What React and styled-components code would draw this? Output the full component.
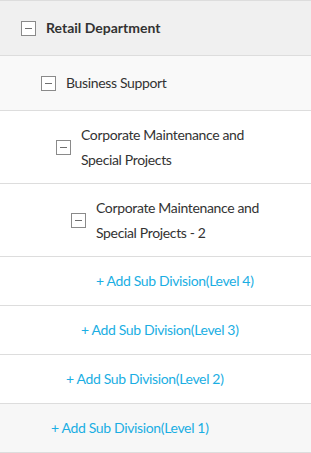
import React from "react";
import styled, { createGlobalStyle } from "styled-components";

const GlobalStyle = createGlobalStyle`
  html, body {
    margin: 0;
    padding: 0;
    background: #ffffff;
  }
  body {
    font-family: Lato, "Open Sans", sans-serif;
    color: #333333;
  }
`;

const Tree = styled.ul`
  list-style: none;
  margin: 0;
  padding: 0;
  width: 311px;
  border-top: 1px solid #dddddd;
`;

const Row = styled.li`
  display: flex;
  align-items: center;
  gap: 10px;
  padding: ${(p) => p.$pad}px 30px ${(p) => p.$pad}px ${(p) => p.$indent}px;
  background: ${(p) => p.$bg || "#ffffff"};
  border-bottom: 1px solid #dddddd;
`;

const Toggle = styled.span`
  flex: none;
  position: relative;
  width: 13px;
  height: 13px;
  border: 1px solid #8a8a8a;
  background: #ffffff;

  &::after {
    content: "";
    position: absolute;
    left: 3px;
    right: 3px;
    top: 6px;
    height: 1px;
    background: #6f6f6f;
  }
`;

const Label = styled.span`
  font-size: 14px;
  line-height: ${(p) => (p.$twoLine ? 25 : 24)}px;
  font-weight: ${(p) => (p.$bold ? 700 : 400)};
  letter-spacing: ${(p) => (p.$bold ? "0" : "-0.35px")};
  color: #333333;
`;

const AddLink = styled.a`
  font-size: 14px;
  line-height: 24px;
  letter-spacing: -0.35px;
  color: #1aaee3;
  text-decoration: none;
  cursor: pointer;
`;

const nodes = [
  { label: "Retail Department", indent: 21, pad: 15, bg: "#f0f0f0", bold: true },
  { label: "Business Support", indent: 41, pad: 15, bg: "#f9f9f9" },
  { label: "Corporate Maintenance and Special Projects", indent: 56, pad: 11, twoLine: true },
  { label: "Corporate Maintenance and Special Projects - 2", indent: 71, pad: 11, twoLine: true },
];

const adds = [
  { level: 4, indent: 96 },
  { level: 3, indent: 81 },
  { level: 2, indent: 66 },
  { level: 1, indent: 51, bg: "#f7f7f7" },
];

export default function App() {
  return (
    <>
      <GlobalStyle />
      <Tree>
        {nodes.map((n) => (
          <Row key={n.label} $indent={n.indent} $pad={n.pad} $bg={n.bg}>
            <Toggle />
            <Label $bold={n.bold} $twoLine={n.twoLine}>{n.label}</Label>
          </Row>
        ))}
        {adds.map((a) => (
          <Row key={a.level} $indent={a.indent} $pad={12} $bg={a.bg}>
            <AddLink>+ Add Sub Division(Level {a.level})</AddLink>
          </Row>
        ))}
      </Tree>
    </>
  );
}
